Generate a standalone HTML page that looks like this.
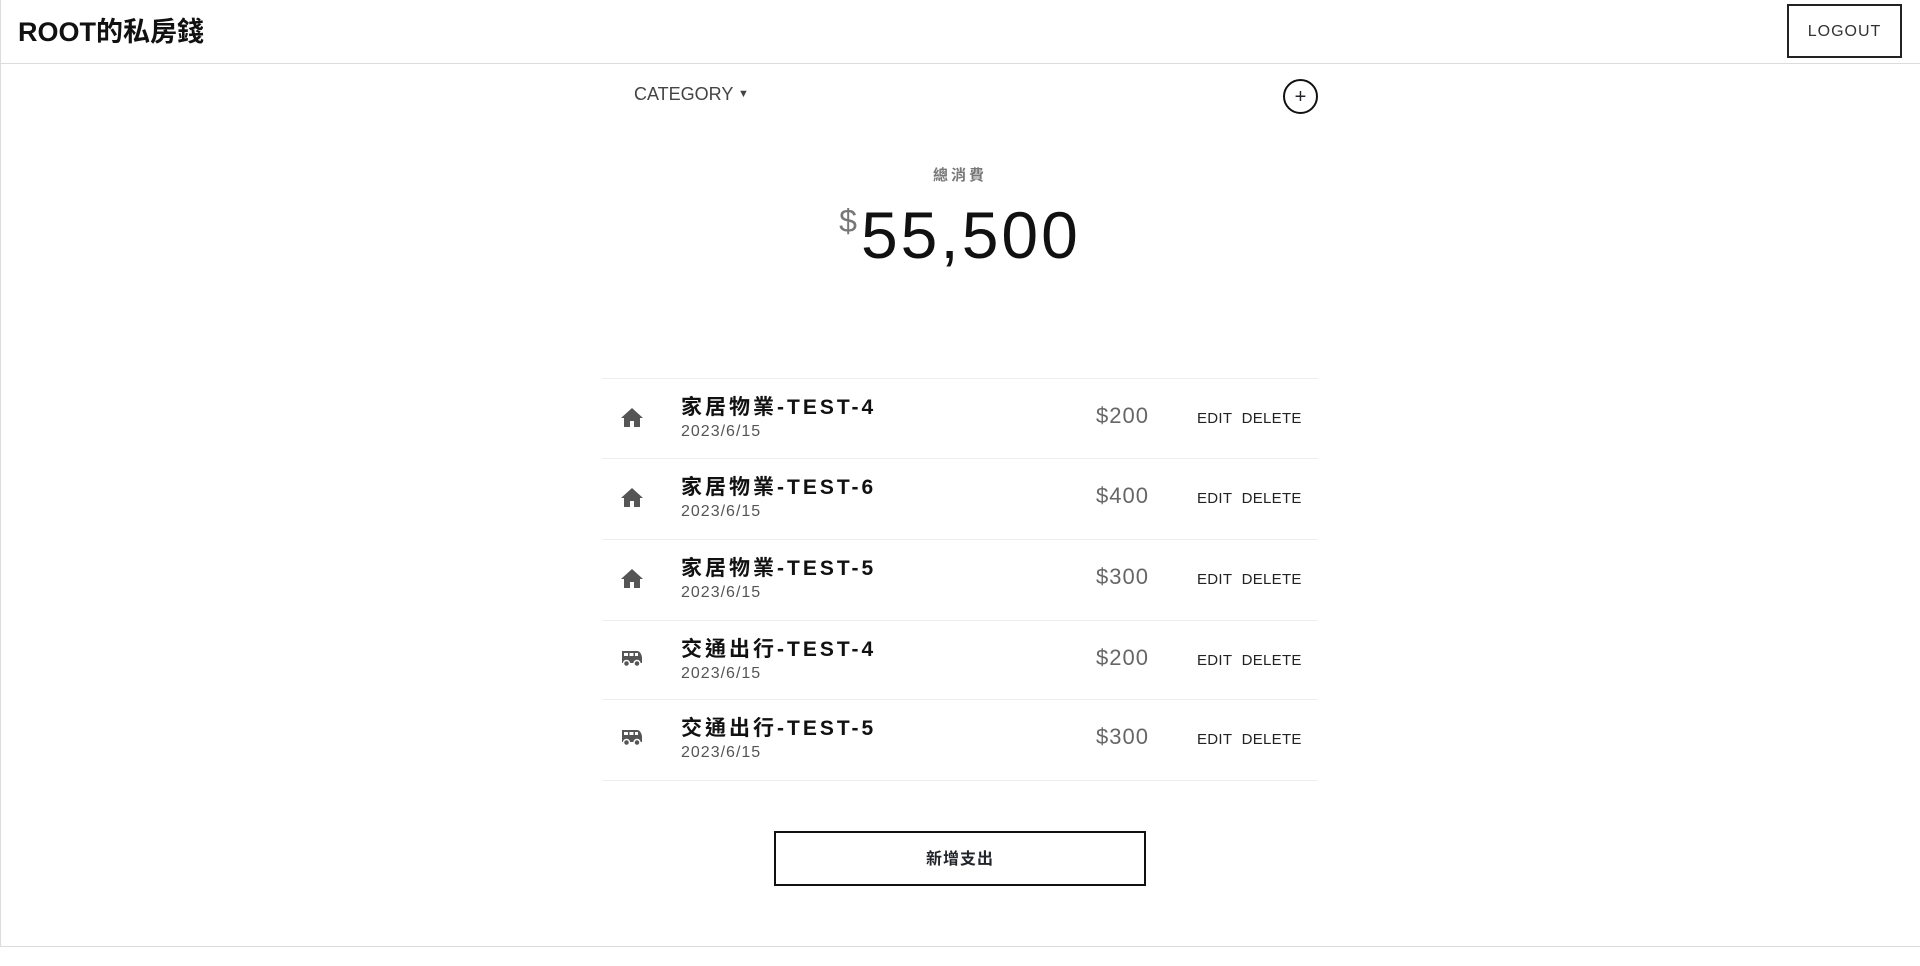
<!DOCTYPE html>
<html><head><meta charset="utf-8"><style>
*{margin:0;padding:0;box-sizing:border-box}
body{width:1920px;height:966px;background:#fff;font-family:"Liberation Sans","Noto Sans CJK TC",sans-serif;color:#212529;position:relative;overflow:hidden}
.abs{position:absolute}
.hdr{left:0;top:0;width:1920px;height:64px;border-bottom:1px solid #dcdcdc;border-left:1px solid #dcdcdc}
.title{left:18px;top:10px;font-size:27px;font-weight:bold;color:#111}
.logout{left:1787px;top:4px;width:115px;height:54px;border:2px solid #222;font-size:16px;letter-spacing:1px;display:flex;align-items:center;justify-content:center;color:#333;padding-top:2px}
.frame{left:0;top:64px;width:1920px;height:883px;border-left:1px solid #dcdcdc;border-bottom:1px solid #dcdcdc}
.cat{left:634px;top:84px;font-size:18px;color:#444}
.plus{left:1283px;top:79px;width:35px;height:35px;border:2px solid #111;border-radius:50%;font-size:20px;display:flex;align-items:center;justify-content:center;line-height:1}
.tot{left:0;width:1920px;top:164px;text-align:center;font-size:15px;font-weight:bold;color:#777;letter-spacing:3px}
.amt{left:0;width:1920px;top:197px;text-align:center;font-size:66px;letter-spacing:3px;color:#111}
.amt sup{font-size:32px;color:#777;vertical-align:26px;letter-spacing:0;margin-right:4px}
.row{left:602px;width:716px;height:80px;border-top:1px solid #eee}
.row .ic{position:absolute;left:18px;top:27px}
.row .t{position:absolute;left:79px;top:12px;font-size:21px;font-weight:bold;letter-spacing:3px;color:#111}
.row .d{position:absolute;left:79px;top:44px;font-size:16px;color:#555;letter-spacing:1px}
.row .p{position:absolute;right:169px;top:24px;font-size:22px;color:#666;letter-spacing:1px}
.row .e{position:absolute;left:595px;top:31px;font-size:15px;color:#222;letter-spacing:.3px;word-spacing:5px}
.last{left:602px;width:716px;top:780px;border-top:1px solid #eee}
.add{left:774px;top:831px;width:372px;height:55px;border:2px solid #111;display:flex;align-items:center;justify-content:center;font-size:16px;font-weight:bold;letter-spacing:1px;padding-bottom:4px}
</style></head><body>
<div class="abs hdr"></div>
<div class="abs title">ROOT的私房錢</div>
<div class="abs logout">LOGOUT</div>
<div class="abs frame"></div>
<div class="abs cat">CATEGORY <span style="font-size:11px;vertical-align:3px">▼</span></div>
<div class="abs plus">+</div>
<div class="abs tot">總消費</div>
<div class="abs amt"><sup>$</sup>55,500</div>

<div class="abs row" style="top:378px"><svg class="ic" width="24" height="22" viewBox="0 0 24 22"><path d="M12 2L1 12h3v9h6v-6h4v6h6v-9h3z" fill="#555"/></svg><div class="t">家居物業-TEST-4</div><div class="d">2023/6/15</div><div class="p">$200</div><div class="e">EDIT DELETE</div></div>
<div class="abs row" style="top:458px"><svg class="ic" width="24" height="22" viewBox="0 0 24 22"><path d="M12 2L1 12h3v9h6v-6h4v6h6v-9h3z" fill="#555"/></svg><div class="t">家居物業-TEST-6</div><div class="d">2023/6/15</div><div class="p">$400</div><div class="e">EDIT DELETE</div></div>
<div class="abs row" style="top:539px"><svg class="ic" width="24" height="22" viewBox="0 0 24 22"><path d="M12 2L1 12h3v9h6v-6h4v6h6v-9h3z" fill="#555"/></svg><div class="t">家居物業-TEST-5</div><div class="d">2023/6/15</div><div class="p">$300</div><div class="e">EDIT DELETE</div></div>
<div class="abs row" style="top:620px"><svg class="ic" width="24" height="22" viewBox="0 0 24 22" style="top:26px"><path d="M2 4h15c3 0 5 4 5 7v5H2z" fill="#555"/><rect x="4" y="6" width="4" height="3" fill="#fff"/><rect x="9.5" y="6" width="4" height="3" fill="#fff"/><rect x="15" y="6" width="3" height="3" fill="#fff"/><circle cx="6.5" cy="16.5" r="3" fill="#555" stroke="#fff" stroke-width="1.5"/><circle cx="17" cy="16.5" r="3" fill="#555" stroke="#fff" stroke-width="1.5"/></svg><div class="t">交通出行-TEST-4</div><div class="d">2023/6/15</div><div class="p">$200</div><div class="e">EDIT DELETE</div></div>
<div class="abs row" style="top:699px"><svg class="ic" width="24" height="22" viewBox="0 0 24 22" style="top:26px"><path d="M2 4h15c3 0 5 4 5 7v5H2z" fill="#555"/><rect x="4" y="6" width="4" height="3" fill="#fff"/><rect x="9.5" y="6" width="4" height="3" fill="#fff"/><rect x="15" y="6" width="3" height="3" fill="#fff"/><circle cx="6.5" cy="16.5" r="3" fill="#555" stroke="#fff" stroke-width="1.5"/><circle cx="17" cy="16.5" r="3" fill="#555" stroke="#fff" stroke-width="1.5"/></svg><div class="t">交通出行-TEST-5</div><div class="d">2023/6/15</div><div class="p">$300</div><div class="e">EDIT DELETE</div></div>
<div class="abs last"></div>
<div class="abs add">新增支出</div>
</body></html>
